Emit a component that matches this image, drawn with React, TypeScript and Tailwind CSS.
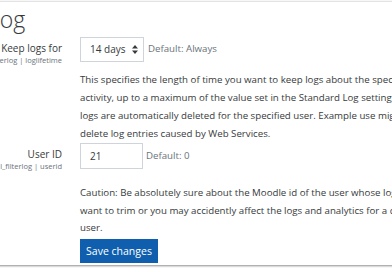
const SortArrows = () => (
  <svg width="6" height="9" viewBox="0 0 6 9" className="fill-[#373a3c]">
    <path d="M3 0 L6 3.5 H0 Z" />
    <path d="M3 9 L6 5.5 H0 Z" />
  </svg>
);

const Label = ({ title, sub }: { title: string; sub: string }) => (
  <div className="flex flex-col items-end pt-[4px]">
    <span className="whitespace-nowrap text-[10px] leading-[14px]">{title}</span>
    <span className="whitespace-nowrap text-[7.5px] leading-[11px] text-[#6a737b]">{sub}</span>
  </div>
);

export default function App() {
  return (
    <div className="w-[392px] h-[272px] overflow-hidden bg-white font-['Open_Sans',sans-serif] text-[#373a3c]">
      <div className="mt-[1px] h-[264px] w-[440px] -ml-[12px] border-t border-[#e3e3e3] bg-white shadow-[0_1px_2px_rgba(0,0,0,0.45)]">
        <h2 className="pt-[2px] text-[23px] leading-[30px] font-light">Log</h2>

        <div className="mt-[3px] grid grid-cols-[74px_1fr] gap-x-[18px]">
          <Label title="Keep logs for" sub="local_filterlog | loglifetime" />
          <div>
            <div className="flex items-center gap-[4px]">
              <div className="flex h-[25px] w-[64px] items-center gap-[7px] border border-[#ced4da] pl-[9px] text-[10px]">
                <span>14 days</span>
                <SortArrows />
              </div>
              <span className="text-[9.7px] text-[#6a737b]">Default: Always</span>
            </div>
            <p className="mt-[9px] whitespace-nowrap text-[9.7px] leading-[18px]">
              This specifies the length of time you want to keep logs about the specified user's
              <br />
              activity, up to a maximum of the value set in the Standard Log settings. Older
              <br />
              logs are automatically deleted for the specified user. Example use might be to
              <br />
              delete log entries caused by Web Services.
            </p>
          </div>
        </div>

        <div className="grid grid-cols-[74px_1fr] gap-x-[18px]">
          <Label title="User ID" sub="local_filterlog | userid" />
          <div>
            <div className="flex items-center gap-[3px]">
              <div className="flex h-[26px] w-[63px] items-center border border-[#ced4da] pl-[9px] text-[10px]">
                21
              </div>
              <span className="text-[9.7px] text-[#6a737b]">Default: 0</span>
            </div>
            <p className="mt-[15px] whitespace-nowrap text-[9.7px] leading-[17.5px]">
              Caution: Be absolutely sure about the Moodle id of the user whose logs you
              <br />
              want to trim or you may accidently affect the logs and analytics for a different
              <br />
              user.
            </p>
            <button className="mt-[0px] h-[24px] w-[78px] bg-[#0f5fae] text-[10.5px] text-white">
              Save changes
            </button>
          </div>
        </div>
      </div>
    </div>
  );
}
